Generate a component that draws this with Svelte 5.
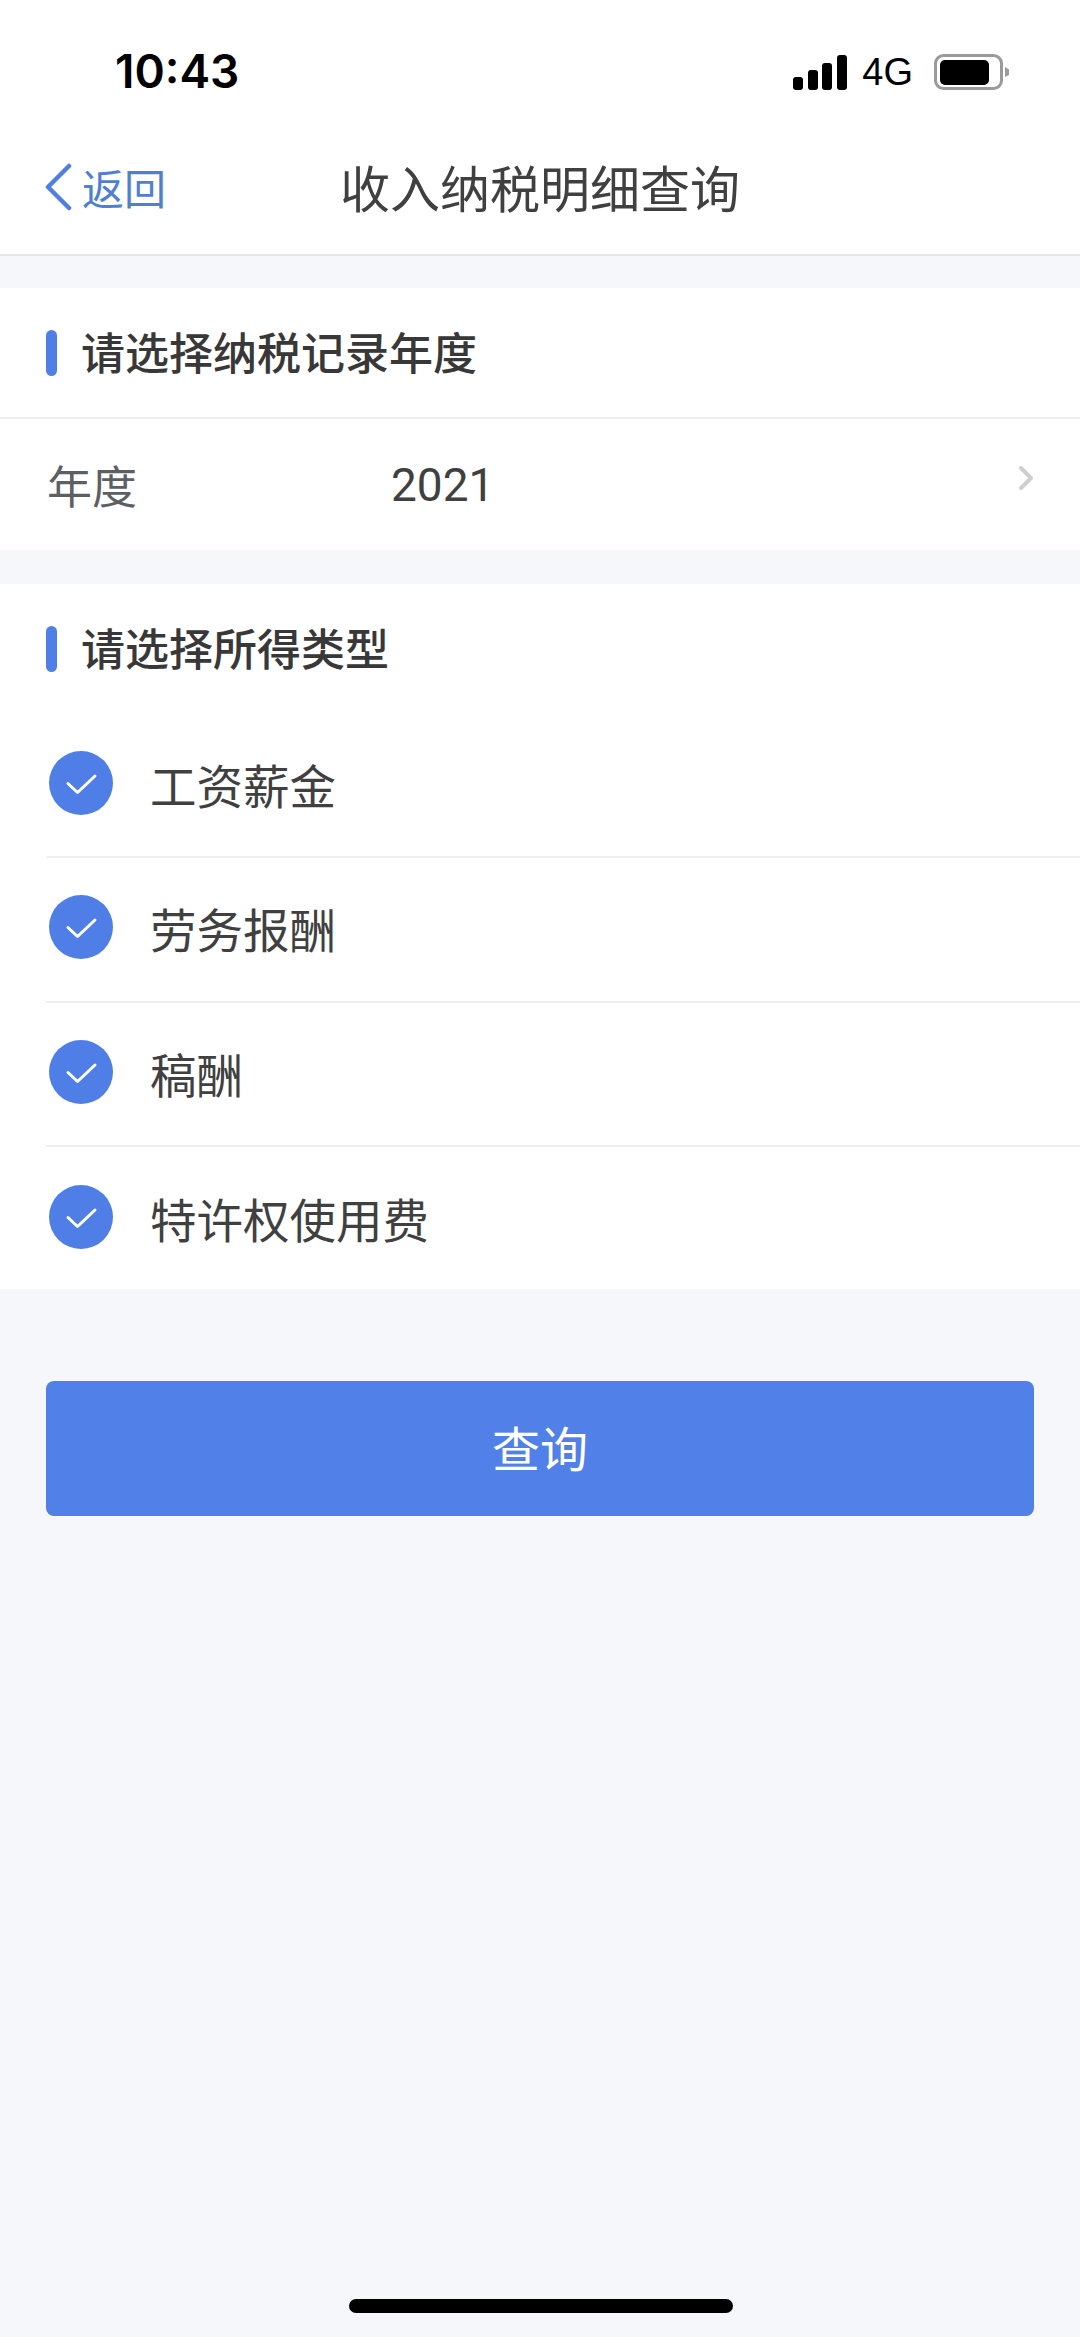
<script>
  const types = ['工资薪金', '劳务报酬', '稿酬', '特许权使用费'];
</script>

<div class="page">
  <header class="status">
    <span class="time">10:43</span>
    <div class="status-right">
      <svg class="signal" width="54" height="35" viewBox="0 0 54 35" aria-hidden="true">
        <rect x="0" y="22" width="10" height="13" rx="3" />
        <rect x="15" y="15" width="10" height="20" rx="3" />
        <rect x="29" y="8" width="10" height="27" rx="3" />
        <rect x="44" y="0" width="10" height="35" rx="3" />
      </svg>
      <span class="net">4G</span>
      <svg class="battery" width="76" height="36" viewBox="0 0 76 36" aria-hidden="true">
        <rect x="1.5" y="1.5" width="66" height="33" rx="8" fill="none" stroke="#9a9a9a" stroke-width="3" />
        <rect x="6" y="6" width="49" height="25" rx="5" fill="#000" />
        <path d="M71 13 L75 15.5 V21 L71 23 Z" fill="#9a9a9a" />
      </svg>
    </div>
  </header>

  <nav class="nav">
    <div class="back">
      <svg width="28" height="48" viewBox="0 0 28 48" aria-hidden="true">
        <path d="M25 3 L4 24 L25 45" fill="none" stroke="#4f7fe0" stroke-width="4.5" stroke-linecap="round" stroke-linejoin="round" />
      </svg>
      <span>返回</span>
    </div>
    <h1>收入纳税明细查询</h1>
  </nav>

  <section class="card first">
    <div class="heading divided"><i></i><h2>请选择纳税记录年度</h2></div>
    <div class="year">
      <span class="year-label">年度</span>
      <span class="year-value">2021</span>
      <svg class="chevron" width="16" height="26" viewBox="0 0 16 26" aria-hidden="true">
        <path d="M3 3 L13 13 L3 23" fill="none" stroke="#cfcfcf" stroke-width="4" stroke-linecap="round" stroke-linejoin="round" />
      </svg>
    </div>
  </section>

  <section class="card second">
    <div class="heading short"><i></i><h2>请选择所得类型</h2></div>
    <ul>
      {#each types as t}
        <li>
          <svg class="tick" width="64" height="64" viewBox="0 0 64 64" aria-hidden="true">
            <circle cx="32" cy="32" r="32" fill="#4f7fe6" />
            <path d="M19 32.5 L28.5 41.5 L46 25" fill="none" stroke="#fff" stroke-width="3" stroke-linecap="round" stroke-linejoin="round" />
          </svg>
          <span>{t}</span>
        </li>
      {/each}
    </ul>
  </section>

  <button class="query"><span>查询</span></button>

  <div class="home"></div>
</div>

<style>
  :global(body) {
    margin: 0;
    background: #f5f7fb;
  }
  .page {
    width: 1080px;
    height: 2337px;
    background: #f5f7fb;
    display: flex;
    flex-direction: column;
    position: relative;
    overflow: hidden;
    font-family: "Noto Sans CJK SC", "Noto Sans", sans-serif;
    color: #404040;
  }
  .status {
    height: 105px;
    background: #fff;
    display: flex;
    justify-content: space-between;
    align-items: flex-start;
    padding: 0 70px 0 115px;
    box-sizing: border-box;
  }
  .time {
    font-family: Inter, "Liberation Sans", sans-serif;
    font-weight: 600;
    font-size: 46px;
    line-height: 54px;
    margin-top: 44px;
    color: #000;
  }
  .status-right {
    display: flex;
    align-items: center;
    margin-top: 54px;
    height: 36px;
  }
  .signal { fill: #000; margin-right: 15px; }
  .net {
    font-family: "Liberation Sans", sans-serif;
    font-size: 38px;
    line-height: 36px;
    color: #000;
    margin-right: 21px;
  }
  .nav {
    height: 149px;
    background: #fff;
    border-bottom: 2px solid #e3e5e9;
    display: grid;
    grid-template-columns: 1fr auto 1fr;
    align-items: center;
  }
  .back {
    display: flex;
    align-items: center;
    gap: 10px;
    padding-left: 44px;
    color: #4f7fd0;
    font-size: 42px;
    line-height: 48px;
    margin-top: 14px;
  }
  h1 {
    margin: 12px 0 0;
    font-size: 50px;
    font-weight: 400;
    line-height: 60px;
    color: #404040;
  }
  .card { background: #fff; }
  .first { margin-top: 32px; }
  .second { margin-top: 34px; height: 705px; }
  .heading {
    display: flex;
    align-items: center;
    padding-left: 46px;
    gap: 24px;
  }
  .heading i {
    width: 11px;
    height: 46px;
    border-radius: 6px;
    background: #4f7fe6;
    flex: none;
  }
  .heading.divided {
    height: 129px;
    border-bottom: 2px solid #eeeff2;
  }
  .heading.short { height: 130px; }
  h2 {
    margin: -4px 0 0;
    font-size: 44px;
    line-height: 50px;
    font-weight: 500;
    color: #383838;
  }
  .year {
    height: 131px;
    display: flex;
    align-items: center;
    padding: 0 46px 0 47px;
    position: relative;
  }
  .year-label {
    width: 344px;
    font-size: 45px;
    line-height: 54px;
    color: #5c5f63;
  }
  .year-value {
    font-family: Roboto, "Liberation Sans", sans-serif;
    font-size: 46px;
    line-height: 54px;
    color: #404040;
    flex: 1;
  }
  .chevron { margin-top: -14px; }
  ul {
    list-style: none;
    margin: 0 0 0 46px;
    padding: 0;
  }
  li {
    height: 144.3px;
    box-sizing: border-box;
    border-bottom: 2px solid #eeeff2;
    display: flex;
    align-items: center;
    gap: 37px;
    font-size: 46.5px;
    color: #404040;
  }
  li:last-child { border-bottom: none; }
  .tick { flex: none; margin-top: -4px; margin-left: 3px; }
  li span { line-height: 56px; margin-top: -2px; }
  .query {
    margin: 92px 46px 0;
    height: 135px;
    background: #5080e8;
    border: none;
    border-radius: 8px;
    color: #fff;
    font-family: inherit;
    font-size: 48px;
    padding: 0 0 6px;
  }
  .home {
    position: absolute;
    left: 349px;
    top: 2299px;
    width: 384px;
    height: 14px;
    border-radius: 7px;
    background: #000;
  }
</style>
